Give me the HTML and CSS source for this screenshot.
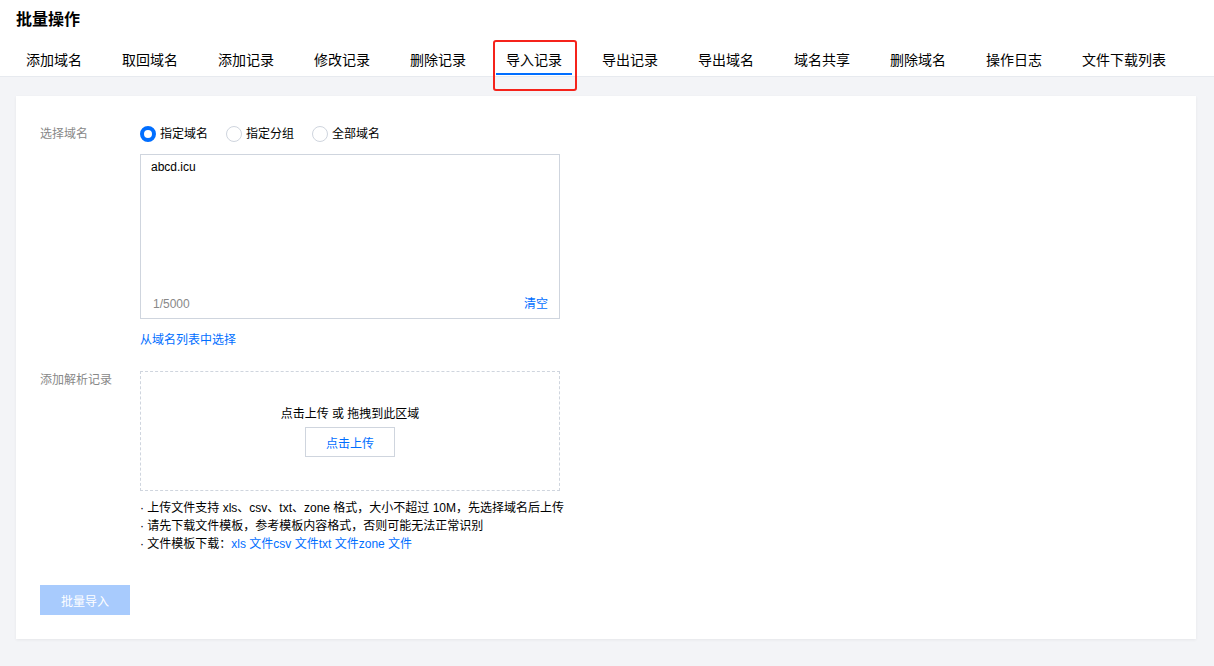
FILE: index.html
```html
<!DOCTYPE html>
<html lang="zh-CN">
<head>
<meta charset="utf-8">
<title>批量操作</title>
<link rel="stylesheet" href="styles.css">
</head>
<body>
<header class="header">
  <h1 class="title">批量操作</h1>
  <nav class="tabs">
    <a class="tab">添加域名</a>
    <a class="tab">取回域名</a>
    <a class="tab">添加记录</a>
    <a class="tab">修改记录</a>
    <a class="tab">删除记录</a>
    <a class="tab active">导入记录<span class="mark"></span></a>
    <a class="tab">导出记录</a>
    <a class="tab">导出域名</a>
    <a class="tab">域名共享</a>
    <a class="tab">删除域名</a>
    <a class="tab">操作日志</a>
    <a class="tab">文件下载列表</a>
  </nav>
</header>
<main class="main">
  <section class="card">
    <div class="row">
      <div class="label">选择域名</div>
      <div class="ctrl">
        <div class="radios">
          <label class="radio"><span class="dot checked"></span>指定域名</label>
          <label class="radio"><span class="dot"></span>指定分组</label>
          <label class="radio"><span class="dot"></span>全部域名</label>
        </div>
        <div class="textarea">
          <div class="ta-text">abcd.icu</div>
          <div class="ta-foot"><span class="count">1/5000</span><a class="link">清空</a></div>
        </div>
        <a class="link pick">从域名列表中选择</a>
      </div>
    </div>
    <div class="row row2">
      <div class="label">添加解析记录</div>
      <div class="ctrl">
        <div class="upload">
          <div class="up-tip">点击上传 或 拖拽到此区域</div>
          <button class="up-btn">点击上传</button>
        </div>
        <ul class="notes">
          <li>· 上传文件支持 xls、csv、txt、zone 格式，大小不超过 10M，先选择域名后上传</li>
          <li>· 请先下载文件模板，参考模板内容格式，否则可能无法正常识别</li>
          <li>· 文件模板下载：<a class="link">xls 文件</a><a class="link">csv 文件</a><a class="link">txt 文件</a><a class="link">zone 文件</a></li>
        </ul>
      </div>
    </div>
    <button class="submit">批量导入</button>
  </section>
</main>
</body>
</html>
```

FILE: styles.css
```css
* { box-sizing: border-box; }
html, body { margin: 0; padding: 0; }
body {
  width: 1214px;
  height: 666px;
  background: #f3f4f7;
  font-family: "Liberation Sans", "Noto Sans CJK SC", sans-serif;
  font-size: 12px;
  color: #000;
  overflow: hidden;
}
.header {
  background: #fff;
  border-bottom: 1px solid #e7eaef;
  padding: 8px 0 0 16px;
}
.title {
  margin: 0;
  font-size: 16px;
  line-height: 24px;
  font-weight: bold;
  color: #000;
}
.tabs {
  display: flex;
  gap: 20px;
  margin-top: 12px;
  position: relative;
}
.tab {
  position: relative;
  padding: 0 10px;
  height: 32px;
  line-height: 32px;
  font-size: 14px;
  color: #000;
  white-space: nowrap;
}
.tab.active .mark {
  position: absolute;
  left: 0;
  right: 0;
  bottom: 1px;
  height: 2px;
  background: #006eff;
}
.tab.active::after {
  content: "";
  position: absolute;
  left: -3px;
  right: -5px;
  top: -4px;
  bottom: -15px;
  border: 2px solid #f5231b;
  border-radius: 3px;
  z-index: 5;
}
.main {
  padding: 19px 18px 0 16px;
}
.card {
  background: #fff;
  box-shadow: 0 1px 3px rgba(0, 0, 0, 0.06);
  padding: 27px 24px 24px 24px;
  height: 543px;
}
.row {
  display: flex;
}
.label {
  width: 100px;
  flex: none;
  color: #888;
  line-height: 22px;
}
.ctrl {
  width: 420px;
}
.radios {
  display: flex;
  height: 20px;
  align-items: center;
  padding-top: 1px;
}
.radio {
  display: flex;
  align-items: center;
  margin-right: 18px;
  color: #000;
  line-height: 18px;
}
.dot {
  width: 16px;
  height: 16px;
  border-radius: 50%;
  border: 1px solid #cfd5de;
  margin-right: 4px;
  background: #fff;
}
.dot.checked {
  border: 4px solid #006eff;
}
.textarea {
  margin-top: 11px;
  width: 420px;
  height: 165px;
  border: 1px solid #cfd5de;
  display: flex;
  flex-direction: column;
  justify-content: space-between;
  padding: 4px 11px 5px 10px;
}
.ta-text {
  line-height: 16px;
}
.ta-foot {
  display: flex;
  justify-content: space-between;
  align-items: flex-end;
  line-height: 18px;
}
.count {
  color: #888;
  padding-left: 2px;
}
.link {
  color: #006eff;
  text-decoration: none;
}
.pick {
  display: block;
  margin-top: 12px;
  line-height: 18px;
}
.row2 {
  margin-top: 22px;
}
.row2 .label {
  line-height: 18px;
}
.upload {
  width: 420px;
  height: 120px;
  border: 1px dashed #cfd5de;
  display: flex;
  flex-direction: column;
  align-items: center;
  padding-top: 33px;
}
.up-tip {
  line-height: 18px;
  color: #000;
}
.up-btn {
  margin-top: 4px;
  width: 90px;
  height: 30px;
  border: 1px solid #cfd5de;
  background: #fff;
  color: #006eff;
  font-family: inherit;
  font-size: 12px;
  padding: 0;
}
.notes {
  list-style: none;
  margin: 8px 0 0 0;
  padding: 0;
  width: 440px;
  white-space: nowrap;
}
.notes li {
  line-height: 18px;
}
.submit {
  margin-top: 32px;
  width: 90px;
  height: 30px;
  border: 0;
  background: #a8cbfd;
  color: #fff;
  font-family: inherit;
  font-size: 12px;
  padding: 0;
}
```
